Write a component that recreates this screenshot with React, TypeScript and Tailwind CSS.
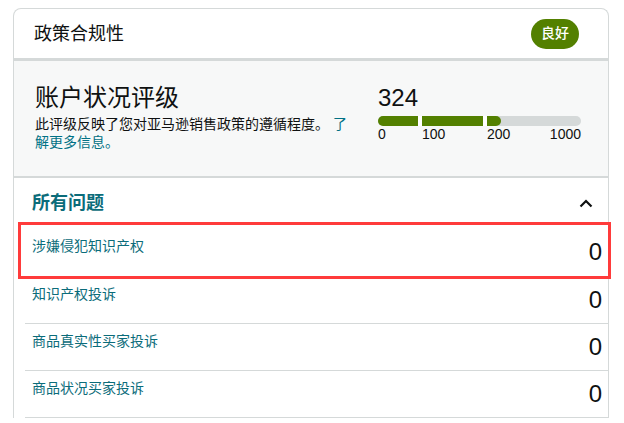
import React from 'react';

const issues = [
  { label: '涉嫌侵犯知识产权', count: 0, flagged: true },
  { label: '知识产权投诉', count: 0 },
  { label: '商品真实性买家投诉', count: 0 },
  { label: '商品状况买家投诉', count: 0 },
];

function ChevronUp() {
  return (
    <svg width="14" height="9" viewBox="0 0 14 9" fill="none">
      <path d="M1.5 7.5L7 2l5.5 5.5" stroke="#0f1111" strokeWidth="2.2" />
    </svg>
  );
}

function RatingBar() {
  return (
    <div className="w-[203px]">
      <div className="text-[24px] leading-[28px] text-[#0f1111]">324</div>
      <div className="mt-[4px] flex h-[10px] w-full overflow-hidden rounded-full bg-[#d5d9d9]">
        <div className="w-[40px] bg-[#538000]" />
        <div className="w-[4px] bg-white" />
        <div className="w-[61px] bg-[#538000]" />
        <div className="w-[4px] bg-white" />
        <div className="w-[14px] rounded-r-full bg-[#538000]" />
      </div>
      <div className="flex text-[14px] leading-[16px] text-[#0f1111]">
        <span className="w-[44px]">0</span>
        <span className="w-[65px]">100</span>
        <span className="flex-1">200</span>
        <span>1000</span>
      </div>
    </div>
  );
}

export default function App() {
  return (
    <div
      className="min-h-[423px] bg-white pt-[8px]"
      style={{ fontFamily: '"Liberation Sans", "Noto Sans CJK SC", sans-serif' }}
    >
      <div className="ml-[13px] w-[596px] rounded-t-[8px] border border-b-0 border-[#d5d9d9]">
        {/* Header */}
        <div className="flex h-[52px] items-center justify-between border-b-[3px] border-[#d5d9d9] pl-[20px] pr-[29px]">
          <h2 className="text-[18px] leading-[24px] text-[#0f1111]">政策合规性</h2>
          <span className="flex h-[30px] w-[48px] items-center justify-center rounded-full bg-[#538000] text-[14px] font-medium text-white">
            良好
          </span>
        </div>

        {/* Account health rating */}
        <div className="flex border-b-2 border-[#d5d9d9] bg-[#f7f8f8] pb-[25px] pl-[21px] pt-[23px]">
          <div className="w-[322px]">
            <h3 className="text-[24px] leading-[28px] text-[#0f1111]">账户状况评级</h3>
            <p className="mt-[3px] text-[14px] leading-[18px] text-[#0f1111]">
              此评级反映了您对亚马逊销售政策的遵循程度。 <span className="text-[#007185]">了解更多信息。</span>
            </p>
          </div>
          <div className="ml-[21px]">
            <RatingBar />
          </div>
        </div>

        {/* All issues */}
        <div className="flex h-[51px] items-center justify-between pl-[18px] pr-[15px]">
          <h3 className="text-[18px] font-bold text-[#0b6c7a]">所有问题</h3>
          <ChevronUp />
        </div>

        <div className="ml-[11px]">
          {issues.map((issue) => (
            <div
              key={issue.label}
              className={`relative flex h-[47px] items-start justify-between pl-[7px] pr-[6px] ${
                issue.flagged ? 'z-10' : 'border-t border-[#d5d9d9]'
              }`}
            >
              <span className="pt-[7px] text-[14px] leading-[20px] text-[#0b6c7a]">{issue.label}</span>
              <span className="pt-[9px] text-[24px] leading-[28px] text-[#0f1111]">{issue.count}</span>
              {issue.flagged && (
                <div className="pointer-events-none absolute -left-[7px] -right-[3px] -top-[7px] h-[57px] border-[3px] border-[#ff3b3b]" />
              )}
            </div>
          ))}
          <div className="border-t border-[#d5d9d9]" />
        </div>
      </div>
    </div>
  );
}
